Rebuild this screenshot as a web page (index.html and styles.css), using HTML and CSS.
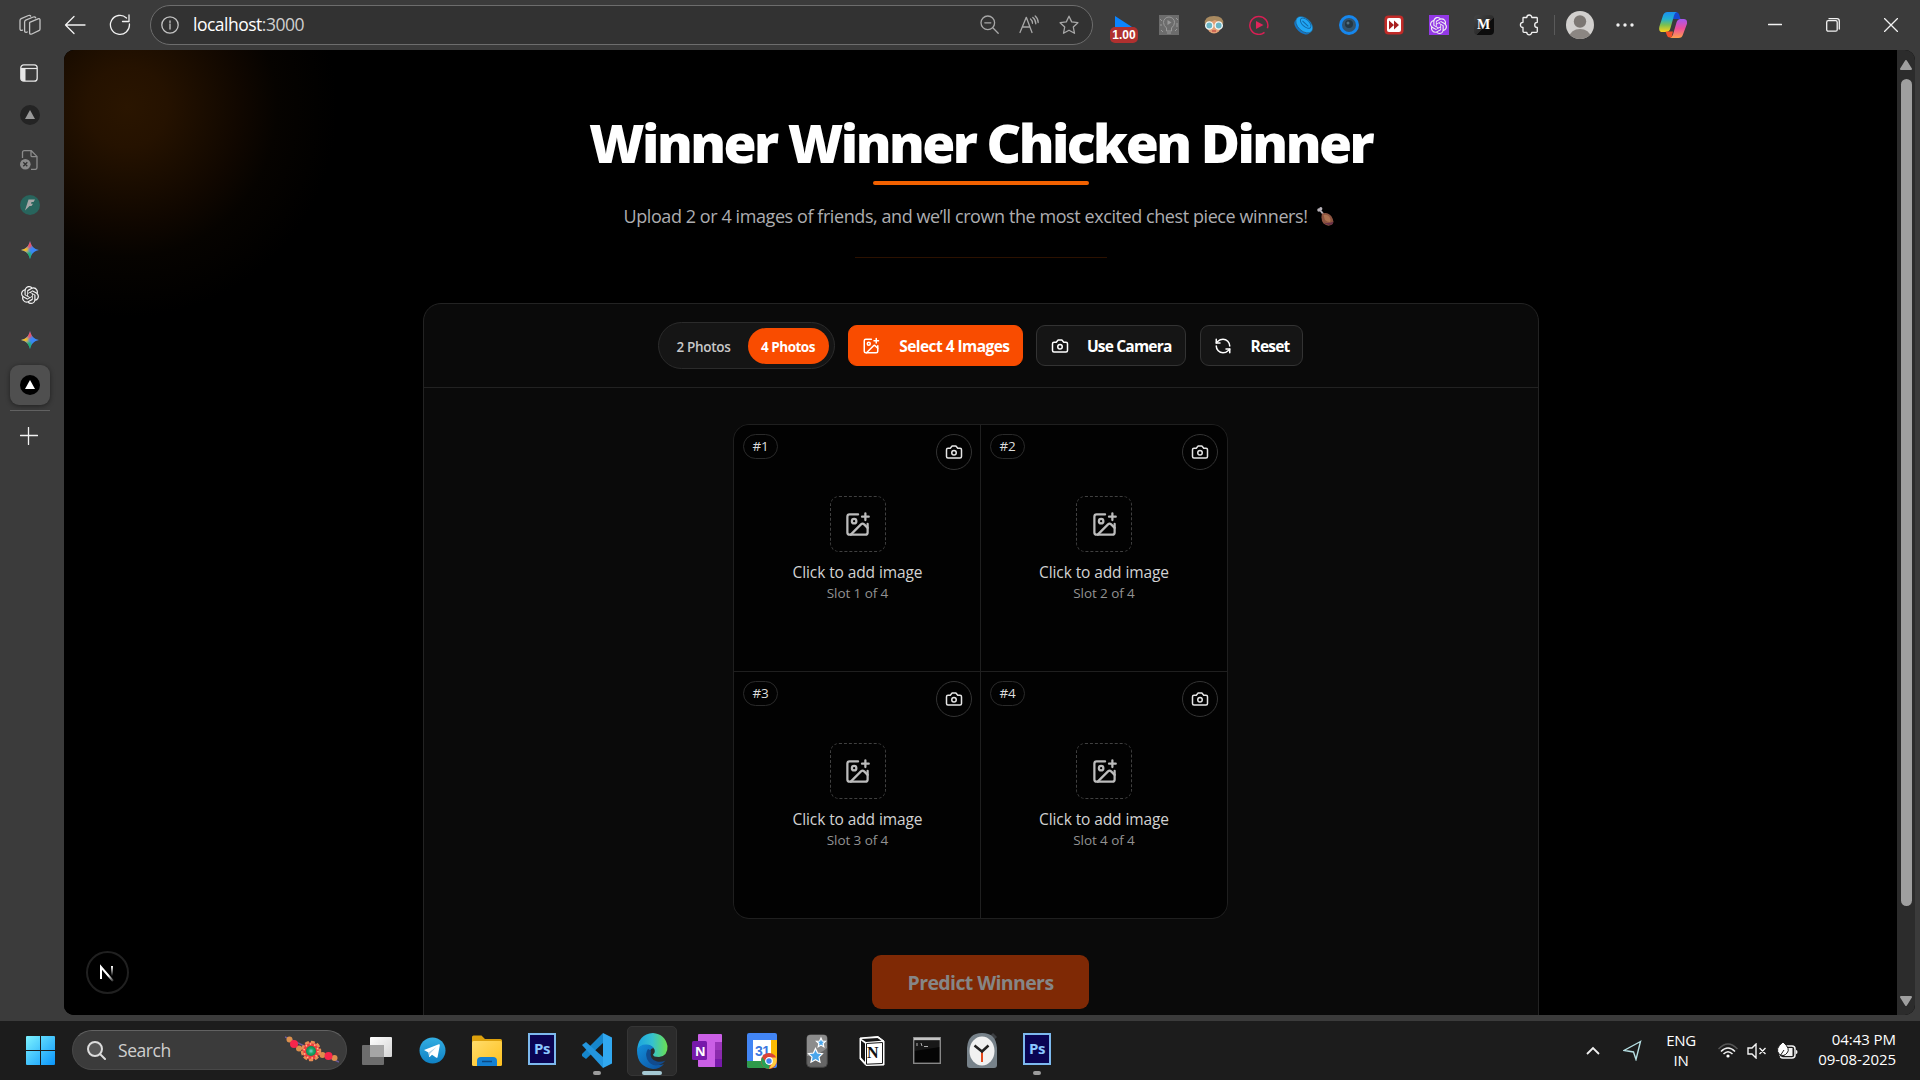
FILE: index.html
```html
<!DOCTYPE html>
<html lang="en">
<head>
<meta charset="utf-8">
<title>Winner Winner Chicken Dinner</title>
<link rel="stylesheet" href="styles.css">
</head>
<body>
<svg class="defs" width="0" height="0" aria-hidden="true">
  <defs>
    <linearGradient id="gStart" x1="0" y1="0" x2="1" y2="1"><stop offset="0" stop-color="#7df3ff"/><stop offset="1" stop-color="#0a95fb"/></linearGradient>
    <linearGradient id="gEdge" x1="0" y1="0" x2="1" y2="0"><stop offset="0" stop-color="#1aa3e0"/><stop offset=".5" stop-color="#35c1d0"/><stop offset="1" stop-color="#6be04f"/></linearGradient>
    <linearGradient id="gEdgeLow" x1="0" y1="0" x2="1" y2="1"><stop offset="0" stop-color="#1390dc"/><stop offset="1" stop-color="#0c4f9e"/></linearGradient>
    <linearGradient id="gTele" x1="0" y1="0" x2="0" y2="1"><stop offset="0" stop-color="#33aee2"/><stop offset="1" stop-color="#0f81c4"/></linearGradient>
    <linearGradient id="gFolder" x1="0" y1="0" x2="1" y2="1"><stop offset="0" stop-color="#ffdc6b"/><stop offset="1" stop-color="#ffc11f"/></linearGradient>
    <linearGradient id="gCopA" x1="0" y1="0" x2="0" y2="1"><stop offset="0" stop-color="#1a8ff0"/><stop offset=".35" stop-color="#22b0cf"/><stop offset=".65" stop-color="#7cc050"/><stop offset="1" stop-color="#ffd31a"/></linearGradient>
    <linearGradient id="gCopB" x1="0" y1="0" x2="0" y2="1"><stop offset="0" stop-color="#a557f0"/><stop offset=".5" stop-color="#ee4e9b"/><stop offset="1" stop-color="#ffa04b"/></linearGradient>
    <linearGradient id="gN" x1="0" y1="0" x2="0" y2="1"><stop offset="0" stop-color="#fff"/><stop offset="1" stop-color="#fff" stop-opacity="0"/></linearGradient>
    <linearGradient id="gNd" x1="0" y1="0" x2="1" y2="1"><stop offset=".6" stop-color="#fff"/><stop offset="1" stop-color="#fff" stop-opacity=".2"/></linearGradient>
    <radialGradient id="gGem"><stop offset="0" stop-color="#7fd0d8"/><stop offset=".5" stop-color="#1ea86a"/><stop offset="1" stop-color="#0d8a4c"/></radialGradient>
    <linearGradient id="gView" x1="0" y1="0" x2="1" y2="1"><stop offset="0" stop-color="#fff"/><stop offset="1" stop-color="#d4d4d4"/></linearGradient>

    <symbol id="camera" viewBox="0 0 24 24"><path d="M14.5 4h-5L7 7H4a2 2 0 0 0-2 2v9a2 2 0 0 0 2 2h16a2 2 0 0 0 2-2V9a2 2 0 0 0-2-2h-3z"/><circle cx="12" cy="13" r="3"/></symbol>
    <symbol id="imagePlus" viewBox="0 0 24 24"><path d="M16 5h6M19 2v6M21 11.5V19a2 2 0 0 1-2 2H5a2 2 0 0 1-2-2V5a2 2 0 0 1 2-2h7.500"/><path d="m21 15-3.086-3.086a2 2 0 0 0-2.828 0L6 21"/><circle cx="9" cy="9" r="2"/></symbol>
    <symbol id="refresh" viewBox="0 0 24 24"><path d="M21 12a9 9 0 0 0-9-9 9.750 9.750 0 0 0-6.740 2.740L3 8"/><path d="M3 3v5h5"/><path d="M3 12a9 9 0 0 0 9 9 9.750 9.750 0 0 0 6.740-2.740L21 16"/><path d="M16 16h5v5"/></symbol>
    <symbol id="knot" viewBox="0 0 24 24">
      <path d="M22.2819 9.8211a5.9847 5.9847 0 0 0-.5157-4.9108 6.0462 6.0462 0 0 0-6.5098-2.9A6.0651 6.0651 0 0 0 4.9807 4.1818a5.9847 5.9847 0 0 0-3.9977 2.9 6.0462 6.0462 0 0 0 .7427 7.0966 5.98 5.98 0 0 0 .511 4.9107 6.051 6.051 0 0 0 6.5146 2.9001A5.9847 5.9847 0 0 0 13.2599 24a6.0557 6.0557 0 0 0 5.7718-4.2058 5.9894 5.9894 0 0 0 3.9977-2.9001 6.0557 6.0557 0 0 0-.7475-7.0729zm-9.022 12.6081a4.4755 4.4755 0 0 1-2.8764-1.0408l.1419-.0804 4.7783-2.7582a.7948.7948 0 0 0 .3927-.6813v-6.7369l2.02 1.1686a.071.071 0 0 1 .038.052v5.5826a4.504 4.504 0 0 1-4.4945 4.4944zm-9.6607-4.1254a4.4708 4.4708 0 0 1-.5346-3.0137l.142.0852 4.783 2.7582a.7712.7712 0 0 0 .7806 0l5.8428-3.3685v2.3324a.0804.0804 0 0 1-.0332.0615L9.74 19.9502a4.4992 4.4992 0 0 1-6.1408-1.6464zM2.3408 7.8956a4.485 4.485 0 0 1 2.3655-1.9728V11.6a.7664.7664 0 0 0 .3879.6765l5.8144 3.3543-2.0201 1.1685a.0757.0757 0 0 1-.071 0l-4.8303-2.7865A4.504 4.504 0 0 1 2.3408 7.872zm16.5963 3.8558L13.1038 8.364 15.1192 7.2a.0757.0757 0 0 1 .071 0l4.8303 2.7913a4.4944 4.4944 0 0 1-.6765 8.1042v-5.6772a.79.79 0 0 0-.407-.667zm2.0107-3.0231l-.142-.0852-4.7735-2.7818a.7759.7759 0 0 0-.7854 0L9.409 9.2297V6.8974a.0662.0662 0 0 1 .0284-.0615l4.8303-2.7866a4.4992 4.4992 0 0 1 6.6802 4.66zM8.3065 12.863l-2.02-1.1638a.0804.0804 0 0 1-.038-.0567V6.0742a4.4992 4.4992 0 0 1 7.3757-3.4537l-.142.0805L8.704 5.459a.7948.7948 0 0 0-.3927.6813zm1.0976-2.3654l2.602-1.4998 2.6069 1.4998v2.9994l-2.5974 1.4997-2.6067-1.4997z"/>
    </symbol>
    <clipPath id="sparkClip"><path d="M9 0c.9 4.800 4.200 8.100 9 9-4.800.9-8.100 4.200-9 9-.9-4.800-4.200-8.100-9-9 4.800-.9 8.100-4.200 9-9z"/></clipPath>
    <filter id="soft" x="-20%" y="-20%" width="140%" height="140%"><feGaussianBlur stdDeviation=".9"/></filter>
    <symbol id="spark" viewBox="0 0 18 18"><g clip-path="url(#sparkClip)"><rect width="18" height="18" fill="#3b86f7"/><g filter="url(#soft)"><path d="M4-2h9L11 5.500 7 8z" fill="#f4505c"/><path d="M-2 4 7 6.500 7.500 10-2 13z" fill="#f9bd1e"/><path d="M4 11.500 9 10.500l4 10H4z" fill="#1fb463"/></g></g></symbol>
    <symbol id="photoshop" viewBox="0 0 28 32"><rect x="1" y="1" width="26" height="30" fill="#0a0453" stroke="#7db9ee" stroke-width="2"/></symbol>
  </defs>
</svg>

<div class="browser">
  <header class="toolbar">
    <div class="nav">
      <span class="slot"><svg width="22" height="22" viewBox="0 0 22 22" class="line"><path d="M10.700 8.300 19 4.800q2-.6 2 1.300v8.800q0 1.300-1.200 1.800l-7 3.300q-2.200.8-2.200-1.300V9z"/><path d="m8.300 18-1 .3q-1.700.2-1.700-1.600V8q0-1.400 1.200-1.900L14.300 3q1.800-.6 2.400.8"/><path d="m3.500 16.200-.8.200Q1 16.500 1 14.800V6.600q0-1.400 1.200-1.900L9.500 1.500q1.600-.6 2.200.6"/></svg></span>
      <span class="slot"><svg width="22" height="20" viewBox="0 0 22 20" class="line bright"><path d="M21 10H1.500M10 1.500 1.500 10l8.500 8.500"/></svg></span>
      <span class="slot"><svg width="22" height="22" viewBox="0 0 22 22" class="line bright"><path d="M17.500 4A9.500 9.500 0 1 0 20.400 10M20 1v6.500h-6.500"/></svg></span>
    </div>
    <div class="address">
      <svg width="18" height="18" viewBox="0 0 18 18" class="line info"><circle cx="9" cy="9" r="8.200"/><path d="M9 8v5M9 4.800v1.600"/></svg>
      <span class="url">localhost<span class="port">:3000</span></span>
      <span class="mini"><svg width="19" height="19" viewBox="0 0 19 19" class="line"><circle cx="7.800" cy="7.800" r="6.800"/><path d="M4.800 7.800h6M12.800 12.800l5.400 5.400"/></svg></span>
      <span class="mini"><svg width="20" height="19" viewBox="0 0 20 19" class="line"><path d="M1 17.500 7.300 2.300 13 17.500M3.500 12h7.500M11.500 4q2 1.600 2 4.300M13.800 2.500q3 2.300 3 6.300M16.200 1q3 2.600 3 6.500"/></svg></span>
      <span class="mini"><svg width="20" height="20" viewBox="0 0 20 20" class="line"><path d="m10 1.200 2.700 5.700 6.200.8-4.600 4.300 1.200 6.300-5.500-3.100-5.500 3.100L5.700 12 1.100 7.700l6.200-.8z"/></svg></span>
    </div>
    <div class="extensions">
      <span class="slot speed"><svg width="18" height="12" viewBox="0 0 18 12"><path d="M0 1v11h17z" fill="#0a84ff"/></svg><b class="badge">1.00</b></span>
      <span class="slot"><svg width="20" height="20" viewBox="0 0 20 20"><rect width="20" height="20" fill="#6c6c6c"/><g fill="none" stroke="#999"><path d="M7.500 13q-3-2.500-3-5.500a5.500 5.500 0 0 1 11 0q0 3-3 5.500v3h-5zM8 18h4M1 4l2 2M1 10h2M17 3l2 2M18 8v4M2 15l2 2M16 16l2-2"/></g><path d="m8.500 5 4 2.500-4 2.500z" fill="#999"/></svg></span>
      <span class="slot"><svg width="20" height="20" viewBox="0 0 20 20"><ellipse cx="10" cy="11" rx="7" ry="7.500" fill="#e2a076"/><path d="M.8 9Q0 1 10 1t9.200 8L16 7.500 11 5 4 8z" fill="#a98a60"/><circle cx="5.300" cy="10.500" r="3.600" fill="#6ab4c4" stroke="#f4f8f8" stroke-width="1.400"/><circle cx="14.700" cy="10.500" r="3.600" fill="#6ab4c4" stroke="#f4f8f8" stroke-width="1.400"/><path d="M8 16h4" stroke="#c34b45" stroke-width="1.300"/></svg></span>
      <span class="slot"><svg width="20" height="20" viewBox="0 0 20 20"><path d="M15.500 17.400a9 9 0 1 1 2.900-4.200" fill="none" stroke="#d81f54" stroke-width="1.500"/><path d="m7 6 7.500 4L7 14z" fill="#e0245a"/></svg></span>
      <span class="slot"><svg width="20" height="20" viewBox="0 0 20 20"><g transform="rotate(43 10 10)"><ellipse cx="10" cy="12.600" rx="9.500" ry="5.500" fill="#1477c8"/><ellipse cx="10" cy="9.500" rx="10" ry="6.500" fill="#21a7f5" stroke="#2a4b66" stroke-width=".6"/><ellipse cx="10" cy="7.500" rx="6.500" ry="3.500" fill="none" stroke="#1268a8"/><path d="M6 8h8" stroke="#1268a8"/></g></svg></span>
      <span class="slot"><svg width="20" height="20" viewBox="0 0 20 20"><circle cx="10" cy="10" r="10" fill="#1687ee"/><circle cx="10" cy="10" r="7" fill="#34536b"/><circle cx="10" cy="9" r="4" fill="#243743"/><circle cx="9" cy="8" r="1.500" fill="#55707f"/></svg></span>
      <span class="slot"><svg width="20" height="20" viewBox="0 0 20 20"><rect x=".5" y=".5" width="19" height="19" rx="4" fill="#c12b28"/><rect x="3" y="3" width="14" height="14" rx="2" fill="#fff"/><path d="m5 5.500 5 4.500-5 4.500zM10 5.500l5 4.500-5 4.500z" fill="#a81f1f"/></svg></span>
      <span class="slot"><span class="purple"><svg width="17" height="17" class="knot"><use href="#knot"/></svg></span></span>
      <span class="slot"><span class="medium">M</span></span>
      <span class="slot"><svg width="20" height="22" viewBox="0 0 20 22" class="line bright"><path d="M4.500 3.500h3.300a2.500 2.500 0 0 1 5 0h4.700q.8 0 .8.800v4a2.500 2.500 0 0 0 0 5.200v4q0 .8-.8.800h-4.700a2.500 2.500 0 0 1-5 0H5q-1 0-1-.8v-4a2.500 2.500 0 0 1 0-5.200v-4q0-.8.500-.8z"/></svg></span>
    </div>
    <div class="profile">
      <svg width="28" height="28" viewBox="0 0 28 28"><clipPath id="face"><circle cx="14" cy="14" r="14"/></clipPath><g clip-path="url(#face)"><rect width="28" height="28" fill="#d2d0ce"/><circle cx="14" cy="10.500" r="6.200" fill="#7c7773"/><ellipse cx="14" cy="26" rx="10.500" ry="8" fill="#8b8682"/></g></svg>
      <svg width="18" height="4" viewBox="0 0 18 4" fill="#f0f0f0" class="dots"><circle cx="2" cy="2" r="1.700"/><circle cx="9" cy="2" r="1.700"/><circle cx="16" cy="2" r="1.700"/></svg>
      <svg width="28" height="26" viewBox="0 0 28 26"><path d="M14 0h3q2.500 0 3.200 2.500L21.500 7H14z" fill="#1747cf"/><path d="M8.500 0H18q-2.200.4-3 3.500L11.500 16q-1 4-4.500 4H3.500Q-.8 20 .4 14.500L4 3.500Q5 0 8.500 0z" fill="url(#gCopA)"/><path d="M6.500 19.500h7.500l-1.500 6h-1.500q-2.500 0-3.200-2.500z" fill="#f4502a"/><path d="M19.500 26H11q2-.5 3-3.500l3.500-12q1-3.500 4-3.500h3.200q4 0 3.200 5L24 22.500Q23 26 19.500 26z" fill="url(#gCopB)"/></svg>
    </div>
    <div class="controls">
      <svg width="14" height="14" viewBox="0 0 14 14" class="line bright"><path d="M.5 6.500h13"/></svg>
      <svg width="14" height="14" viewBox="0 0 14 14" class="line bright"><rect x=".7" y="2.700" width="10.500" height="10.500" rx="1.500"/><path d="M3 .7h8q2.300 0 2.300 2.300v8"/></svg>
      <svg width="14" height="14" viewBox="0 0 14 14" class="line bright"><path d="m.5.5 13 13M13.500.5l-13 13"/></svg>
    </div>
  </header>

  <div class="main">
    <nav class="tabs">
      <span class="tab tab-menu"><svg width="18" height="18" viewBox="0 0 18 18"><rect x=".8" y=".8" width="16.400" height="16.400" rx="3" fill="none" stroke="#e6e6e6" stroke-width="1.300"/><path d="M1 4.500h16" stroke="#e6e6e6" stroke-width="1.200"/><path d="M1 5h4.500v12H3q-2 0-2-2z" fill="#e6e6e6"/></svg></span>
      <span class="tab"><svg width="20" height="20" viewBox="0 0 20 20"><circle cx="10" cy="10" r="10" fill="#242424"/><path d="m10 5 5 9H5z" fill="#999"/></svg></span>
      <span class="tab"><svg width="20" height="20" viewBox="0 0 20 20" fill="none" stroke="#8b8b8b" stroke-width="1.300"><path d="M2.500 8V2.500Q2.500.7 4.300.7h7l5.700 5.700v11q0 2-2 2h-4M11 1v4.500q0 1.200 1.200 1.200H17"/><circle cx="5.300" cy="14.300" r="5.300" fill="#8b8b8b" stroke="none"/><path d="m3.300 12.300 4 4M7.300 12.300l-4 4" stroke="#333"/></svg></span>
      <span class="tab"><svg width="20" height="20" viewBox="0 0 20 20"><circle cx="10" cy="10" r="10" fill="#28655d"/><path d="M8.500 4.500H15L13.500 7h-2l-.5 1.700h2L11.500 11h-2L5 15.500z" fill="#a7a7a7"/></svg></span>
      <span class="tab"><svg width="18" height="18"><use href="#spark"/></svg></span>
      <span class="tab"><svg width="18" height="18" class="knot"><use href="#knot"/></svg></span>
      <span class="tab"><svg width="18" height="18"><use href="#spark"/></svg></span>
      <span class="tab active"><svg width="20" height="20" viewBox="0 0 20 20"><circle cx="10" cy="10" r="10" fill="#000"/><path d="m10 5 5 9H5z" fill="#fff"/></svg></span>
      <span class="rule"></span>
      <span class="tab tab-new"><svg width="18" height="18" viewBox="0 0 18 18" class="line bright"><path d="M8.500 .5v17M.5 8.500h17"/></svg></span>
    </nav>

    <div class="viewport">
      <main class="page">
        <h1>Winner Winner Chicken Dinner</h1>
        <div class="underline"></div>
        <p class="lead"><span class="lead-text">Upload 2 or 4 images of friends, and we’ll crown the most excited chest piece winners!</span>
          <svg width="17" height="19" viewBox="0 0 17 19"><path d="m3 3 4 5" stroke="#b9b3ba" stroke-width="2"/><circle cx="1.900" cy="3" r="1.700" fill="#b9b3ba"/><circle cx="3.800" cy="1.700" r="1.600" fill="#b9b3ba"/><path d="M5 6.500q6-2 9.500 3 3.500 5.500.5 8-4 2.700-8.500-1Q3.500 13 5 6.500z" fill="#8d5440"/><path d="M6.500 8q3.500-1 6 2 1.500 2.500.5 5-3 0-5-2z" fill="#ae7351"/><path d="M6.500 15.500q3.500 3.500 8.500 2 1.500-1.200 1.300-3-5 2.500-9.800 1z" fill="#663047"/></svg>
        </p>
        <div class="hairline"></div>

        <section class="card">
          <div class="actions">
            <div class="toggle"><span class="opt">2 Photos</span><span class="opt on">4 Photos</span></div>
            <button class="btn primary"><svg class="ico"><use href="#imagePlus"/></svg><span>Select 4 Images</span></button>
            <button class="btn cam"><svg class="ico"><use href="#camera"/></svg><span>Use Camera</span></button>
            <button class="btn reset"><svg class="ico"><use href="#refresh"/></svg><span>Reset</span></button>
          </div>
          <div class="grid">
            <div class="cell"><div class="cell-top"><span class="num">#1</span><span class="shoot"><svg class="ico"><use href="#camera"/></svg></span></div><span class="drop"><svg class="ico"><use href="#imagePlus"/></svg></span><span class="add">Click to add image</span><span class="which">Slot 1 of 4</span></div>
            <div class="cell"><div class="cell-top"><span class="num">#2</span><span class="shoot"><svg class="ico"><use href="#camera"/></svg></span></div><span class="drop"><svg class="ico"><use href="#imagePlus"/></svg></span><span class="add">Click to add image</span><span class="which">Slot 2 of 4</span></div>
            <div class="cell"><div class="cell-top"><span class="num">#3</span><span class="shoot"><svg class="ico"><use href="#camera"/></svg></span></div><span class="drop"><svg class="ico"><use href="#imagePlus"/></svg></span><span class="add">Click to add image</span><span class="which">Slot 3 of 4</span></div>
            <div class="cell"><div class="cell-top"><span class="num">#4</span><span class="shoot"><svg class="ico"><use href="#camera"/></svg></span></div><span class="drop"><svg class="ico"><use href="#imagePlus"/></svg></span><span class="add">Click to add image</span><span class="which">Slot 4 of 4</span></div>
          </div>
          <button class="predict">Predict Winners</button>
        </section>
        <span class="next"><svg width="16" height="18" viewBox="0 0 16 18"><path d="M2 15V3L14 17" fill="none" stroke="url(#gNd)" stroke-width="2"/><rect x="12" y="2" width="2" height="10" fill="url(#gN)"/></svg></span>
      </main>
      <div class="scrollbar">
        <svg width="12" height="10" viewBox="0 0 12 10"><path d="M6 1 11 9H1z" fill="#9f9f9f" stroke="#9f9f9f" stroke-width="2" stroke-linejoin="round"/></svg>
        <span class="thumb"></span>
        <svg class="down" width="12" height="10" viewBox="0 0 12 10"><path d="M6 9 11 1H1z" fill="#9f9f9f" stroke="#9f9f9f" stroke-width="2" stroke-linejoin="round"/></svg>
      </div>
    </div>
  </div>
</div>

<footer class="taskbar">
  <span class="start"><svg width="29" height="29" viewBox="0 0 29 29"><path d="M1 0h13v14H0V1q0-1 1-1zM15 0h13q1 0 1 1v13H15zM0 15h14v14H1q-1 0-1-1zM15 15h14v13q0 1-1 1H15z" fill="url(#gStart)"/></svg></span>
  <div class="search">
    <svg width="19" height="19" viewBox="0 0 19 19" fill="#575757" stroke="#dcdcdc" stroke-width="2"><circle cx="8" cy="8" r="7"/><path d="m13 13 5 5" stroke-linecap="round"/></svg>
    <span>Search</span>
    <svg class="rakhi" width="54" height="28" viewBox="0 0 54 28"><path d="m0 1 54 25" stroke="#6a5a9a" stroke-width="1.500"/><g fill="#dc8f4d"><circle cx="4.500" cy="3.500" r="3"/><circle cx="14" cy="12.500" r="3"/><circle cx="37.500" cy="19" r="3"/><circle cx="49.500" cy="22" r="3"/></g><circle cx="9" cy="8" r="4" fill="#f8264b"/><circle cx="43.500" cy="20" r="4" fill="#f8264b"/><circle cx="26" cy="15" r="9" fill="#ee3c40" stroke="#e98d54" stroke-width="2.500" stroke-dasharray="4 2"/><circle cx="26" cy="15" r="7" fill="none" stroke="#ffc18a" stroke-width="1.500" stroke-dasharray="1.500 3"/><circle cx="26" cy="15" r="5" fill="url(#gGem)"/></svg>
  </div>
  <div class="apps">
    <span class="app"><svg width="30" height="28" viewBox="0 0 30 28"><rect x="8" y="0" width="22" height="20" rx="1" fill="url(#gView)"/><rect x="0" y="8" width="22" height="20" rx="1" fill="#6d6d6d"/><rect x="8" y="8" width="14" height="12" fill="#a5a5a5"/></svg></span>
    <span class="app"><svg width="27" height="27" viewBox="0 0 27 27"><circle cx="13.500" cy="13.500" r="13" fill="url(#gTele)"/><path d="M5 13 19.800 7.200q1.200-.3 1 1L18.600 20q-.4 1.300-1.600.6L13 17.700l-2.300 2.200q-.5.3-.6-.2l-.7-4.300z" fill="#fff"/><path d="m9.500 15.500 8-5.500-6.300 6.400-.5 3.400z" fill="#b5d3e6"/></svg></span>
    <span class="app"><svg width="30" height="32" viewBox="0 0 30 32"><path d="M0 8V2q0-1.500 1.500-1.500h8L13 4h15.500Q30 4 30 5.500V9H0z" fill="#dda10d"/><rect y="6" width="30" height="25" rx="1.500" fill="url(#gFolder)"/><path d="M5 31v-5q0-4 4-4h12q4 0 4 4v5z" fill="#1480d2"/><path d="M10 26.500h10" stroke="#0b4a84" stroke-width="1.500"/></svg></span>
    <span class="app"><span class="ps"><svg width="28" height="32"><use href="#photoshop"/></svg><b>Ps</b></span></span>
    <span class="app running"><svg width="30" height="36" viewBox="0 0 30 36"><path d="M21 0v10L4 26l-4-3v-2z" fill="#1686cc"/><path d="M0 12l4-3 17 15v11z" fill="#2396df"/><path d="M21 0l9 4.500v26L21 35z" fill="#31a8f0"/></svg></span>
    <span class="app focus"><svg width="32" height="36" viewBox="0 0 32 36"><path d="M1 18Q2 1 17 0q12 1 14.500 13Q32 23 23 24q-6 0-6-2.500 2.500-2 1.500-5Q16 11.500 9 12q-6 1-8 6z" fill="url(#gEdge)"/><path d="M1 17q3-6 9.500-5.500 5 .3 7 3.500Q13 16 13 22q1 9 10 10 3 0 5-1-4 5-11 5Q1 34 1 17z" fill="url(#gEdgeLow)"/><path d="M12 16q-3 4-1 10 4 8 12 6 4-1 6.500-4.500-4 2-8.500 1-8-2-6-11z" fill="#114b8e"/></svg></span>
    <span class="app"><svg width="30" height="33" viewBox="0 0 30 33"><rect x="6" width="24" height="33" rx="1" fill="#cb5fe6"/><path d="M23 8h7v8h-7z" fill="#9b35ba"/><path d="M23 16h7v9h-7z" fill="#8b2bad"/><path d="M23 25h7v8h-7z" fill="#7719aa"/><rect y="7" width="15" height="19" rx="1.500" fill="#7719aa"/></svg><b class="one">N</b></span>
    <span class="app"><svg width="30" height="35" viewBox="0 0 30 35"><rect width="30" height="35" rx="2" fill="#4285f4"/><path d="M24 7h6v22h-6z" fill="#fbbc04"/><path d="M0 28h24v7H2q-2 0-2-2z" fill="#2f9a4b"/><rect x="6" y="7" width="18" height="21" fill="#fff"/></svg><b class="day">31</b><svg class="chrome" width="16" height="16" viewBox="0 0 16 16"><circle cx="8" cy="8" r="8" fill="#db4437"/><path d="M1 4q-2.500 7 3 11l4 1 1-7-5-1z" fill="#27a254"/><path d="M8 4.500h7.500Q17.500 13 8 16l3-6z" fill="#ffcd40"/><circle cx="8" cy="8" r="3.300" fill="#4285f4" stroke="#fff" stroke-width="1.200"/></svg></span>
    <span class="app"><svg width="22" height="34" viewBox="0 0 22 34"><rect x=".7" y=".7" width="20.600" height="32.600" rx="4" fill="#666" stroke="#444"/><path d="M1 22Q15 20 21 14V4q0-3-3-3H4Q1 1 1 4z" fill="#8c8c8c"/><path d="m15 4 1.300 3 3.200.3-2.400 2.200.7 3.200-2.800-1.600-2.800 1.600.7-3.200-2.400-2.200 3.200-.3zM9.500 14.500l2 4.500 5 .7-3.500 3.500 1 5-4.500-2.500L5 28.200l1-5-3.500-3.500 5-.7z" fill="#4aa6ec" stroke="#fff" stroke-width="1.200"/></svg></span>
    <span class="app"><svg width="26" height="30" viewBox="0 0 26 30"><path d="m1 2 18-1.500L25 5v24L7 29.500 1 23z" fill="#fff" stroke="#fff" stroke-linejoin="round"/><path d="M2.500 3 18.500 2l4 2.800L7 6zM2 4.500l4 3V26l-4-4.500z" fill="#161616"/><path d="M7.500 7.500 23.500 6.500v21l-16 .7z" fill="#fff" stroke="#161616"/></svg><b class="notion">N</b></span>
    <span class="app"><svg width="28" height="27" viewBox="0 0 28 27"><rect x=".7" y=".7" width="26.600" height="25.600" fill="#050505" stroke="#878787" stroke-width="1.400"/><path d="M1 2h26" stroke="#c4c4c4" stroke-width="2.500"/><path d="M4 6v3M6 6v0M6 9v0M8 6l1 3M11 9.500h4" stroke="#aaa"/><path d="M1.500 14 27 10V4H1.500z" fill="#fff" opacity=".08"/></svg></span>
    <span class="app"><svg width="30" height="35" viewBox="0 0 30 35"><path d="m23 3 3-3 4 4-3 3z" fill="#3c3f42"/><path d="M0 15Q1 0 15 0t15 15v17q0 3-3 3H3q-3 0-3-3z" fill="#77828a"/><ellipse cx="15" cy="18" rx="12.500" ry="14.500" fill="#f1f1f1"/><path d="M15 18v11" stroke="#e4481c" stroke-width="2"/><path d="M7.500 12.500 15 18.500l6.500-6" fill="none" stroke="#222" stroke-width="2.500"/></svg></span>
    <span class="app running"><span class="ps"><svg width="28" height="32"><use href="#photoshop"/></svg><b>Ps</b></span></span>
  </div>
  <div class="tray">
    <svg class="chev" width="14" height="9" viewBox="0 0 14 9"><path d="M1 8l6-6 6 6" fill="none" stroke="#f0f0f0" stroke-width="1.800"/></svg>
    <svg class="loc" width="19" height="21" viewBox="0 0 19 21"><path d="M17.500 1.500 1 10.500l9.500 1.500 2.500 7.500z" fill="none" stroke="#b6dfe3" stroke-width="1.400"/></svg>
    <div class="lang"><span>ENG</span><span>IN</span></div>
    <svg class="wifi" width="20" height="16" viewBox="0 0 20 16" fill="none" stroke="#f2f2f2" stroke-width="1.500"><path d="M.5 6Q10-4 19.500 6" stroke="#555"/><path d="M3 8.500q7-7 14 0M5.500 11q4.500-4.500 9 0"/><circle cx="10" cy="13" r="1.600" fill="#fff" stroke="none"/></svg>
    <svg class="vol" width="20" height="16" viewBox="0 0 20 16" fill="none" stroke="#f2f2f2" stroke-width="1.400"><path d="M9 1v14l-4-4H1V5h4zM12.500 5l6 6M18.500 5l-6 6"/></svg>
    <svg class="bat" width="21" height="18" viewBox="0 0 21 18"><rect x="3" y="4" width="15" height="12" rx="3" fill="none" stroke="#f2f2f2" stroke-width="1.500"/><path d="M19 8q1.500 0 1.500 2T19 12z" fill="#f2f2f2"/><path d="M10 6h5.500v8H7z" fill="#f2f2f2"/><path d="M6 0q8 7 4 11-3 4-7.500 1.500Q-3 7 6 0z" fill="#fff" stroke="#1c1c1c"/><path d="M2 15.500 7 8" stroke="#1c1c1c"/></svg>
    <div class="clock"><span>04:43 PM</span><span>09-08-2025</span></div>
  </div>
</footer>
</body>
</html>
```
FILE: styles.css
```css
* { box-sizing: border-box; }
body {
  margin: 0;
  width: 1920px;
  height: 1080px;
  overflow: hidden;
  display: flex;
  flex-direction: column;
  background: #1c1c1c;
  font-family: "Open Sans", "Noto Sans", sans-serif;
  color: #fff;
}
svg { display: block; flex: none; }
.defs { position: absolute; }
button { font: inherit; color: inherit; margin: 0; padding: 0; border: 0; }
.line { fill: none; stroke: #c4c4c4; stroke-width: 1.3; stroke-linecap: round; stroke-linejoin: round; }
.bright { stroke: #f2f2f2; }
.knot { fill: #f2f2f2; }

/* browser frame */
.browser { height: 1021px; background: #3b3b3b; display: flex; flex-direction: column; flex: none; }
.toolbar { height: 50px; display: flex; align-items: center; flex: none; }
.slot { width: 45px; height: 50px; display: flex; align-items: center; justify-content: center; flex: none; }
.nav { display: flex; padding-left: 7px; width: 150px; }
.address {
  width: 943px; height: 40px; flex: none; margin-bottom: 1px;
  display: flex; align-items: center;
  border: 1px solid #6d6d6d; border-radius: 20px; background: #323232;
  padding: 0 3px 0 10px;
}
.url { font-size: 17.5px; letter-spacing: -.5px; margin-left: 14px; flex: 1; padding-bottom: 1px; }
.port { color: #cfcfcf; }
.mini { width: 40px; display: flex; justify-content: center; }
.mini .line { stroke: #a8a8a8; }
.extensions { display: flex; padding-left: 8px; width: 461px; }
.speed { position: relative; align-items: flex-start; padding: 15px 0 0 0; }
.badge {
  position: absolute; left: 9px; top: 27px; width: 28px; height: 16px; border-radius: 5px;
  background: #b0302f; font: bold 12px/16px "Liberation Sans", sans-serif; text-align: center;
}
.purple { width: 20px; height: 20px; background: #9338e6; display: flex; align-items: center; justify-content: center; }
.medium { width: 20px; height: 20px; border-radius: 4px; background: linear-gradient(135deg, #444, #2c2c2c 55%, #0c0c0c 56%); font: bold 14px/20px "Liberation Serif", serif; text-align: center; }
.profile { width: 173px; padding-left: 11px; border-left: 1px solid #5a5a5a; height: 20px; display: flex; align-items: center; }
.dots { margin: 0 25px 0 22px; }
.controls { display: flex; gap: 44px; padding-left: 41px; }

.main { flex: 1; display: flex; min-height: 0; padding: 0 5px 6px 0; }
.tabs { width: 64px; padding: 3px 14px 0 10px; display: flex; flex-direction: column; align-items: center; flex: none; }
.tab { width: 40px; height: 40px; margin-bottom: 5px; display: flex; align-items: center; justify-content: center; flex: none; }
.tab-menu { margin-bottom: 2px; padding-right: 2px; }
.tab-new { padding-right: 2px; }
.tab.active { background: #4f4f4f; border-radius: 9px; box-shadow: 0 1px 5px rgba(0,0,0,.45); margin-bottom: 5px; }
.rule { width: 40px; height: 1px; background: #616161; margin-bottom: 5px; flex: none; }

.viewport { flex: 1; display: flex; min-width: 0; border-radius: 10px; overflow: hidden; background: #000; }
.page {
  position: relative; width: 1833px; overflow: hidden;
  display: flex; flex-direction: column; align-items: center;
  background: radial-gradient(circle at 63px 57px, #2a1500 0, #251200 40px, #1b0d00 75px, #100700 115px, #060300 150px, #000 210px) #000;
}
h1 { margin: 53px 0 0; font-size: 53.5px; line-height: 80px; font-weight: 800; letter-spacing: -2.57px; height: 78px; white-space: nowrap; flex: none; }
.underline { width: 216px; height: 4px; border-radius: 2px; background: #f26100; flex: none; }
.lead { margin: 15px 0 0; height: 32px; flex: none; display: flex; align-items: center; gap: 9px; font-size: 18px; color: #adadb0; padding-right: 4px; }
.lead-text { letter-spacing: -.42px; white-space: nowrap; }
.hairline { width: 252px; height: 1px; margin: 25px 0 45px; background: #2c1100; flex: none; }

.card {
  width: 1116px; height: 900px; flex: none;
  border: 1px solid #232323; border-radius: 18px; background: #0a0a0a;
  display: flex; flex-direction: column; align-items: center;
}
.actions { align-self: stretch; height: 84px; flex: none; display: flex; justify-content: center; align-items: center; border-bottom: 1px solid #222; padding-right: 1px; }
.toggle { width: 177px; height: 47px; border: 1px solid #2b2b2b; border-radius: 24px; background: #151515; display: flex; align-items: center; padding: 0 5px; margin-right: 13px; }
.opt { height: 36px; line-height: 38px; width: 84px; padding-right: 4px; text-align: center; font-size: 13.5px; font-weight: 600; color: #c8c8c8; letter-spacing: -.3px; border-radius: 18px; }
.opt.on { width: 81px; padding: 0; background: #f94c00; color: #fff; font-weight: 700; letter-spacing: -.5px; }
.ico { width: 18px; height: 18px; fill: none; stroke: currentColor; stroke-width: 2; stroke-linecap: round; stroke-linejoin: round; }
.btn { height: 41px; border-radius: 9px; display: flex; align-items: center; justify-content: space-between; padding: 0 13px 0 14px; font-size: 15.5px; font-weight: 700; letter-spacing: -.8px; background: #151515; border: 1px solid #333; white-space: nowrap; }
.primary { width: 175px; background: #f94c00; border-color: #f94c00; margin-right: 13px; letter-spacing: -.55px; padding: 0 12px 0 13px; }
.cam { width: 150px; margin-right: 14px; }
.reset { width: 103px; padding-left: 13px; padding-right: 12px; }

.grid { width: 495px; height: 495px; margin-top: 36px; flex: none; border: 1px solid #1f1f1f; border-radius: 16px; overflow: hidden; background: #1f1f1f; display: grid; grid-template-columns: 1fr 1fr; grid-template-rows: 1fr 1fr; gap: 1px; }
.cell { background: #020202; display: flex; flex-direction: column; align-items: center; padding: 9px 9px 0 9px; }
.cell:nth-child(odd) { padding-right: 8px; }
.cell-top { align-self: stretch; display: flex; justify-content: space-between; align-items: flex-start; height: 62px; }
.num { width: 35px; height: 25px; border: 1px solid #2a2a2a; border-radius: 13px; font-size: 13.5px; line-height: 23px; text-align: center; color: #dcdcdc; letter-spacing: -.3px; }
.shoot { width: 36px; height: 36px; border: 1px solid #333; border-radius: 50%; display: flex; align-items: center; justify-content: center; color: #e5e5e5; }
.drop { width: 56px; height: 56px; border: 1px dashed #404040; border-radius: 9px; display: flex; align-items: center; justify-content: center; color: #bcbcbc; }
.drop .ico { width: 27px; height: 27px; }
.add { margin-top: 9px; font-size: 15.5px; line-height: 22px; color: #d2d2d2; letter-spacing: -.1px; font-weight: 500; }
.which { font-size: 13.5px; line-height: 20px; color: #929292; letter-spacing: -.08px; }
.predict { width: 217px; height: 54px; margin-top: 36px; flex: none; border-radius: 9px; background: #7f2905; color: #868686; font-size: 19.5px; font-weight: 700; letter-spacing: -.6px; }
.next { position: absolute; left: 22px; bottom: 21px; width: 43px; height: 43px; border: 2px solid #202020; border-radius: 50%; display: flex; align-items: center; justify-content: center; padding-right: 2px; }

.scrollbar { width: 18px; background: #2c2c2c; display: flex; flex-direction: column; align-items: center; padding: 10px 0 9px; }
.thumb { width: 11px; height: 827px; margin-top: 9px; border-radius: 6px; background: #9f9f9f; }
.down { margin-top: auto; }

/* taskbar */
.taskbar { height: 59px; flex: none; background: #1c1c1c; display: flex; align-items: center; }
.start { width: 72px; padding-left: 26px; }
.search { width: 275px; height: 40px; margin-bottom: 1px; border-radius: 20px; border: 1px solid #484848; border-top-color: #626262; background: #3b3b3b; display: flex; align-items: center; padding: 0 7px 0 14px; font-size: 17.5px; color: #cfcfcf; letter-spacing: -.45px; flex: none; }
.search span { margin: 0 auto 0 12px; padding-bottom: 1px; }
.apps { display: flex; gap: 5px; padding-left: 5px; width: 715px; flex: none; }
.app { position: relative; width: 50px; height: 50px; border-radius: 5px; display: flex; align-items: center; justify-content: center; flex: none; }
.focus { background: #2b2b2b; border: 1px solid #353535; }
.running::after, .focus::after { content: ""; position: absolute; bottom: 1px; left: 21px; width: 8px; height: 4px; border-radius: 2px; background: #9b9b9b; }
.focus::after { left: 14px; width: 20px; bottom: 0; background: #a5c9d4; }
.app b { position: absolute; }
.ps { position: relative; display: flex; margin-bottom: 3px; }
.ps b { left: 6px; top: 4px; font-size: 15px; line-height: 22px; color: #8cc8ff; letter-spacing: -.5px; }
.one { left: 13px; top: 16px; font-size: 13px; line-height: 18px; }
.day { left: 18px; top: 15px; font: bold 14px/20px "Liberation Sans", sans-serif; color: #3b78e0; letter-spacing: -.5px; }
.chrome { position: absolute; right: 10px; bottom: 7px; }
.notion { left: 20px; top: 17px; font: bold 16px/20px "Liberation Serif", serif; color: #111; }
.tray { flex: 1; display: flex; align-items: center; justify-content: flex-end; padding-right: 24px; font-size: 15px; line-height: 20px; letter-spacing: -.3px; }
.loc { margin: 0 24px 0 23px; }
.lang { display: flex; flex-direction: column; align-items: center; width: 30px; margin-right: 22px; padding-bottom: 2px; }
.wifi { margin-left: 0; }
.vol { margin: 0 10px 0 9px; }
.clock { display: flex; flex-direction: column; align-items: flex-end; width: 78px; margin-left: 20px; white-space: nowrap; letter-spacing: -.05px; padding-bottom: 3px; }
```
